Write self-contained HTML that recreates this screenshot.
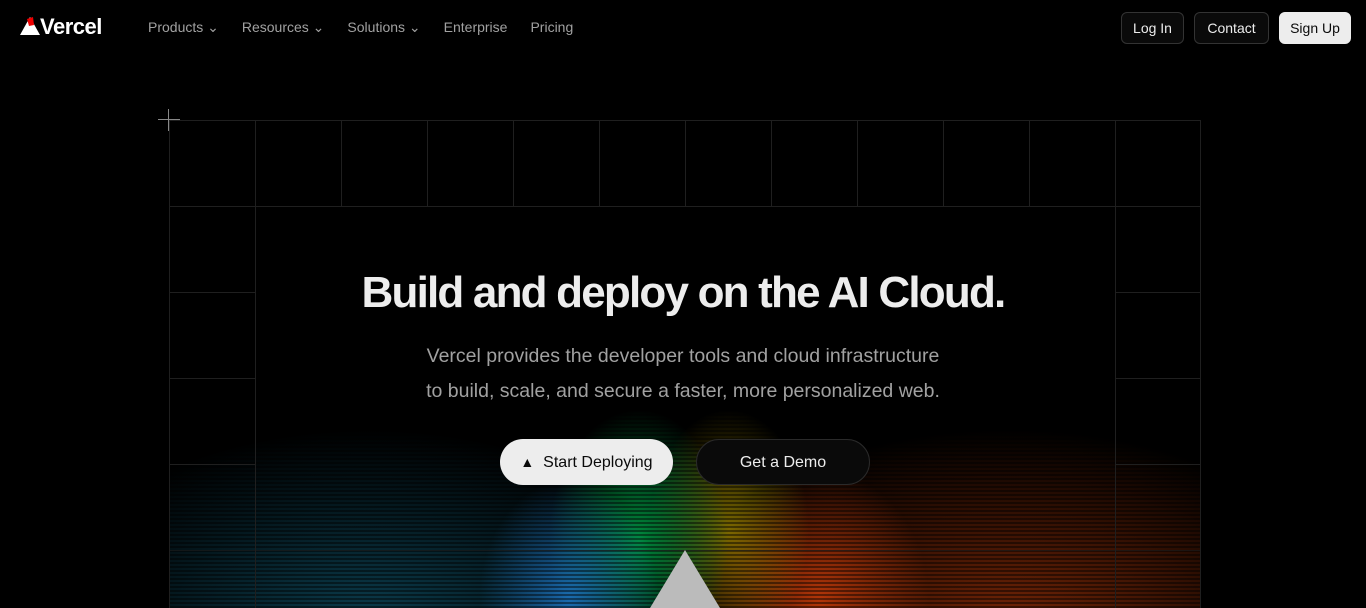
<!DOCTYPE html>
<html><head><meta charset="utf-8"><style>
*{margin:0;padding:0;box-sizing:border-box}
body{width:1366px;height:608px;background:#000;overflow:hidden;font-family:"Liberation Sans",sans-serif;color:#ededed;position:relative}
.nav{position:absolute;top:0;left:0;right:0;height:56px}
.logo{position:absolute;left:20px;top:14px;font-weight:bold;font-size:22px;color:#fff;letter-spacing:-0.5px}
.links{position:absolute;left:148px;top:19px;font-size:14px;color:#a1a1a1}
.links span{margin-right:23px}
.btn{position:absolute;top:12px;height:32px;border:1px solid #333;border-radius:6px;font-size:14px;line-height:30px;text-align:center;color:#ededed;background:#0a0a0a}
.grid{position:absolute;left:169px;top:120px;width:1032px;height:488px;overflow:hidden}
.l{position:absolute;background:#1f1f1f}
.glow{position:absolute;left:169px;top:380px;width:1032px;height:228px;
background:
radial-gradient(ellipse 90px 120px at 400px 220px,rgba(30,120,200,.85),transparent),
radial-gradient(ellipse 90px 130px at 470px 160px,rgba(0,160,70,.85),transparent),
radial-gradient(ellipse 80px 120px at 560px 150px,rgba(200,170,0,.6),transparent),
radial-gradient(ellipse 110px 130px at 650px 220px,rgba(200,60,10,.85),transparent),
radial-gradient(ellipse 330px 190px at 200px 240px,rgba(20,110,140,.55),transparent),
radial-gradient(ellipse 340px 190px at 840px 240px,rgba(190,60,10,.6),transparent);}
.stripes{position:absolute;left:169px;top:380px;width:1032px;height:228px;
background:repeating-linear-gradient(0deg,rgba(0,0,0,.45) 0 2px,transparent 2px 4px)}
h1{position:absolute;top:268px;left:0;right:0;text-align:center;font-size:44px;font-weight:bold;color:#ededed;letter-spacing:-1.8px}
p{position:absolute;top:339px;left:0;right:0;text-align:center;font-size:19.5px;line-height:35px;color:#a1a1a1}
.cta{position:absolute;top:439px;height:46px;border-radius:23px;font-size:16px;line-height:46px;text-align:center}
</style></head><body>
<div class="glow"></div><div class="stripes"></div>
<div class="grid">
<div class="l" style="left:0;top:0;width:1032px;height:1px"></div>
<div class="l" style="left:0;top:86px;width:1032px;height:1px"></div>
<div class="l" style="left:0;top:172px;width:86px;height:1px"></div>
<div class="l" style="left:946px;top:172px;width:86px;height:1px"></div>
<div class="l" style="left:0;top:258px;width:86px;height:1px"></div>
<div class="l" style="left:946px;top:258px;width:86px;height:1px"></div>
<div class="l" style="left:0;top:344px;width:86px;height:1px"></div>
<div class="l" style="left:946px;top:344px;width:86px;height:1px"></div>
<div class="l" style="left:0;top:430px;width:1032px;height:1px;opacity:.6"></div>
<div class="l" style="left:0;top:0;width:1px;height:488px"></div>
<div class="l" style="left:86px;top:0;width:1px;height:488px"></div>
<div class="l" style="left:946px;top:0;width:1px;height:488px"></div>
<div class="l" style="left:1031px;top:0;width:1px;height:488px"></div>
<div class="l" style="left:172px;top:0;width:1px;height:86px"></div><div class="l" style="left:258px;top:0;width:1px;height:86px"></div><div class="l" style="left:344px;top:0;width:1px;height:86px"></div><div class="l" style="left:430px;top:0;width:1px;height:86px"></div><div class="l" style="left:516px;top:0;width:1px;height:86px"></div><div class="l" style="left:602px;top:0;width:1px;height:86px"></div><div class="l" style="left:688px;top:0;width:1px;height:86px"></div><div class="l" style="left:774px;top:0;width:1px;height:86px"></div><div class="l" style="left:860px;top:0;width:1px;height:86px"></div>
</div>
<div style="position:absolute;left:158px;top:119px;width:22px;height:1px;background:#888"></div>
<div style="position:absolute;left:168px;top:109px;width:1px;height:22px;background:#888"></div>
<svg style="position:absolute;left:650px;top:550px" width="70" height="58"><polygon points="35,0 0,58 70,58" fill="#bbb"/></svg>
<div class="nav">
<div class="logo"><svg width="20" height="18" style="vertical-align:-1px"><polygon points="10,0 0,18 20,18" fill="#fff"/><polygon points="7,2 13,0 14,8 9,9" fill="#e00"/></svg>Vercel</div>
<div class="links"><span>Products ⌄</span><span>Resources ⌄</span><span>Solutions ⌄</span><span>Enterprise</span><span>Pricing</span></div>
<div class="btn" style="left:1121px;width:63px">Log In</div>
<div class="btn" style="left:1194px;width:75px">Contact</div>
<div class="btn" style="left:1279px;width:72px;background:#ededed;color:#0a0a0a;border-color:#ededed">Sign Up</div>
</div>
<h1>Build and deploy on the AI Cloud.</h1>
<p>Vercel provides the developer tools and cloud infrastructure<br>to build, scale, and secure a faster, more personalized web.</p>
<div class="cta" style="left:500px;width:173px;background:#ededed;color:#0a0a0a"><span style="font-size:14px">▲</span>&nbsp; Start Deploying</div>
<div class="cta" style="left:696px;width:174px;background:#0a0a0a;border:1px solid #2a2a2a;color:#ededed">Get a Demo</div>
</body></html>
